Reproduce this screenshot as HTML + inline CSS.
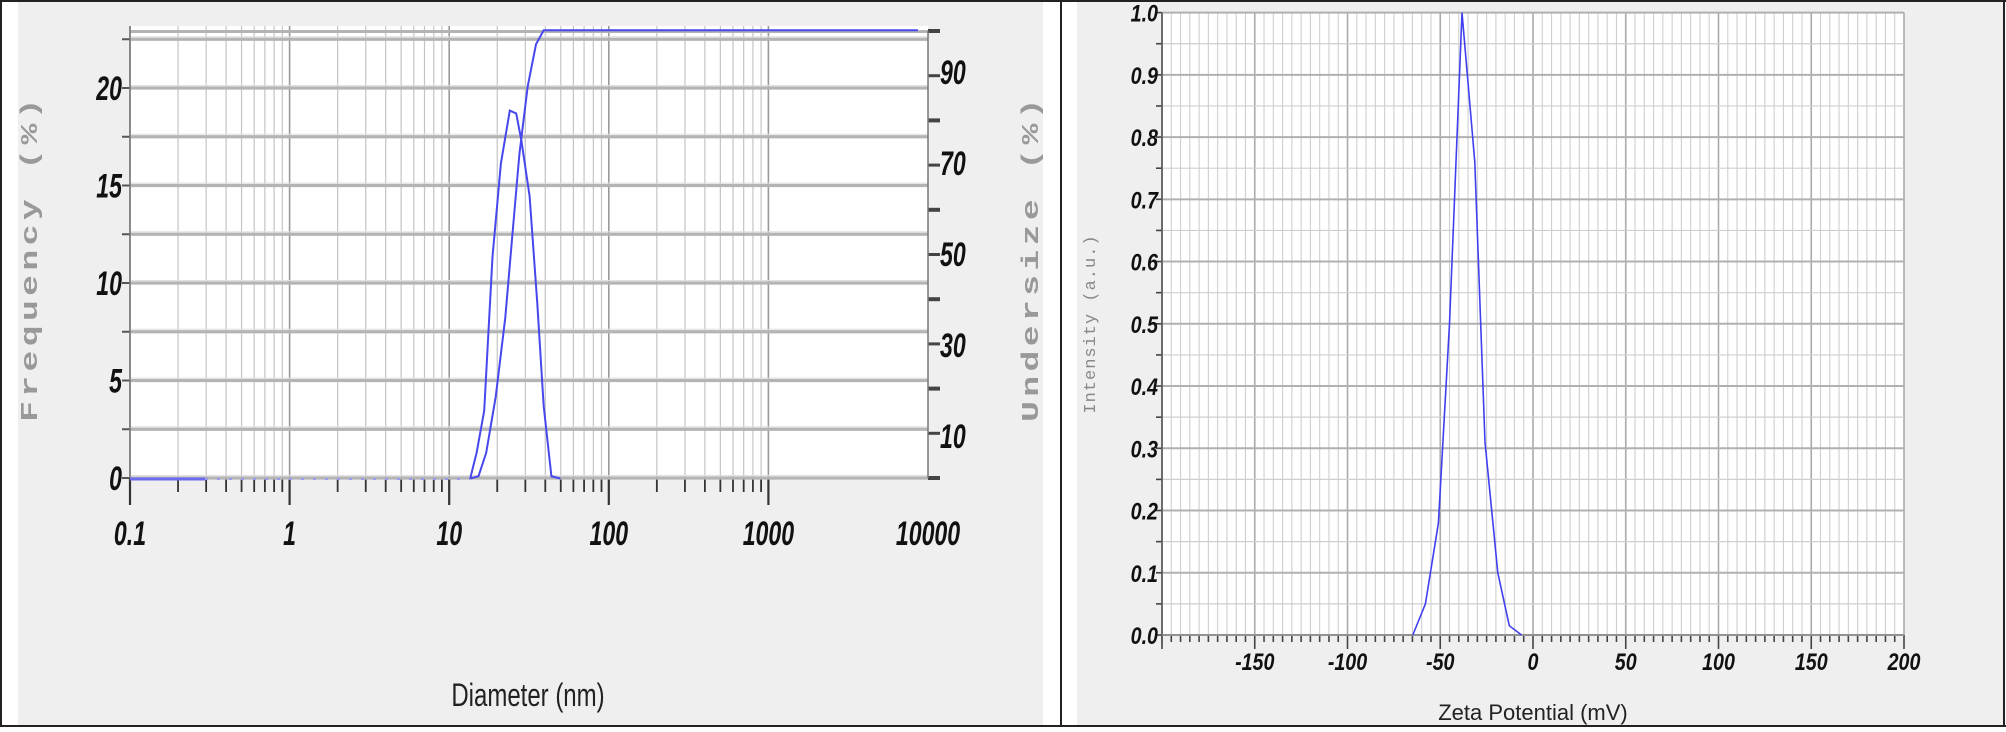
<!DOCTYPE html>
<html><head><meta charset="utf-8"><style>
html,body{margin:0;padding:0;background:#fff;}
body{width:2006px;height:732px;overflow:hidden;position:relative;}
svg{position:absolute;left:0;top:0;}
.n{font-family:"Liberation Sans",sans-serif;font-weight:bold;font-style:italic;fill:#111;}
</style></head><body>
<svg id="s" width="2006" height="732" viewBox="0 0 2006 732" xmlns="http://www.w3.org/2000/svg">
<rect x="0" y="0" width="2006" height="732" fill="#fff"/>
<rect x="18" y="2" width="1025" height="723" fill="#efefef"/>
<rect x="1077" y="2" width="927" height="723" fill="#efefef"/>
<rect x="130" y="26" width="798" height="452" fill="#fff"/>
<rect x="1162" y="12" width="742" height="623" fill="#fff"/>
<g id="g"></g>
<rect x="0" y="0" width="2006" height="2" fill="#222"/>
<rect x="0" y="0" width="2" height="726" fill="#222"/>
<rect x="0" y="725" width="2006" height="2" fill="#222"/>
<rect x="2003" y="0" width="2" height="726" fill="#222"/>
<rect x="1060" y="0" width="2" height="726" fill="#222"/>
<text x="528" y="706" font-family="Liberation Sans,sans-serif" font-size="32" fill="#222" text-anchor="middle" transform="translate(528 0) scale(0.75 1) translate(-528 0)">Diameter (nm)</text>
<text font-family="Liberation Mono,monospace" font-size="24" font-weight="bold" fill="#999" letter-spacing="3" text-anchor="middle" transform="translate(37 258) rotate(-90) scale(1.45 1)">Frequency (%)</text>
<text font-family="Liberation Mono,monospace" font-size="24" font-weight="bold" fill="#999" letter-spacing="3" text-anchor="middle" transform="translate(1038 258) rotate(-90) scale(1.45 1)">Undersize (%)</text>
<text font-family="Liberation Mono,monospace" font-size="17" fill="#888" letter-spacing="1" text-anchor="middle" transform="translate(1095 324) rotate(-90)">Intensity (a.u.)</text>
<text x="1533" y="720" font-family="Liberation Sans,sans-serif" font-size="22" fill="#222" text-anchor="middle">Zeta Potential (mV)</text>
</svg>
<script>
var g=document.getElementById('g'),h='';
function L(x1,y1,x2,y2,c,w){h+='<line x1="'+x1+'" y1="'+y1+'" x2="'+x2+'" y2="'+y2+'" stroke="'+c+'" stroke-width="'+w+'"/>';}
function T(x,y,t,fs,sx,anc){h+='<text class="n" font-size="'+fs+'" text-anchor="'+anc+'" transform="translate('+x+' '+y+') scale('+sx+' 1)">'+t+'</text>';}
var X0=130,D=159.6,Y0=478,U=19.5;
for(var k=0;k<5;k++){for(var m=1;m<10;m++){if(k==4&&m>1)break;var x=X0+D*(k+Math.log10(m));
 L(x,26,x,Y0,m==1?'#999':'#c4c4c4',m==1?1.6:1.2);
 L(x,Y0,x,m==1?505:492,'#333',m==1?2.2:1.8);}}
for(var i=0;i<=9;i++){var y=Y0-i*2.5*U;L(X0,y,928,y,'#b4b4b4',3.2);L(X0,y-2.5,928,y-2.5,'#e0e0e0',1);L(122,y,X0,y,'#555',2);}
L(X0,Y0-23*U+2,928,Y0-23*U+2,'#b4b4b4',3);
L(X0,26,X0,Y0,'#777',1.5);
for(var i=0;i<=10;i++){var y=Y0-i*(Y0-31)/10;L(928,y,940,y,'#444',i%2?3:4);}
L(928,31,928,Y0,'#777',1.5);
[[0,'0'],[5,'5'],[10,'10'],[15,'15'],[20,'20']].forEach(function(a){T(122,Y0-a[0]*U+12,a[1],34,0.68,'end');});
[[90,72],[70,163],[50,254],[30,345],[10,436]].forEach(function(a){T(940,a[1]+12,a[0],34,0.68,'start');});
['0.1','1','10','100','1000','10000'].forEach(function(t,k){T(X0+D*k,545,t,34,0.68,'middle');});
var sx=1/1.5633,sy=1/2.142;
function P(pts){return pts.map(function(p){return (p[0]*sx).toFixed(1)+','+(p[1]*sy).toFixed(1)}).join(' ');}
h+='<line x1="130" y1="479" x2="205" y2="479" stroke="#6b6bf0" stroke-width="3"/>';
h+='<line x1="205" y1="479" x2="470" y2="479" stroke="#9a9af5" stroke-width="2" stroke-dasharray="3 9"/>';
h+='<polyline fill="none" stroke="#4747ee" stroke-width="2" points="'+P([[735,1025],[745,970],[757,880],[770,550],[783,350],[797,237],[807,243],[815,300],[828,420],[840,650],[850,870],[862,1020],[876,1025]])+'"/>';
h+='<polyline fill="none" stroke="#4747ee" stroke-width="2" points="'+P([[735,1025],[748,1020],[760,970],[775,850],[790,680],[800,520],[812,330],[825,185],[838,95],[850,65],[1435,65]])+'"/>';
var RX=1162,RW=742,RT=12.6,RB=635;
for(var i=0;i<=80;i++){var x=RX+i*RW/80;L(x,RT,x,RB,i%10==0?'#aaa':'#cfcfcf',i%10==0?1.6:1.1);L(x,RB,x,RB+(i%10==0?14:7),'#444',1.6);}
for(var i=0;i<=20;i++){var y=RB-i*(RB-RT)/20;L(RX,y,RX+RW,y,i%2==0?'#b0b0b0':'#cfcfcf',i%2==0?2:1.2);L(RX-6,y,RX,y,'#444',1.6);}
L(RX,RT,RX,RB+8,'#555',1.6);L(RX,RB,RX+RW,RB,'#888',1.6);
for(var i=0;i<=10;i++){T(RX-4,RB-i*(RB-RT)/10+9,(i/10).toFixed(1),24,0.82,'end');}
[-150,-100,-50,0,50,100,150,200].forEach(function(v){T(RX+(v+200)*RW/400,670,v,24,0.82,'middle');});
var z=[[-64.8,0],[-58,0.05],[-51,0.18],[-45,0.5],[-38.3,1.0],[-31.4,0.76],[-25.9,0.31],[-19,0.1],[-12.8,0.015],[-6.2,0]];
h+='<polyline fill="none" stroke="#3f3ff0" stroke-width="1.6" points="'+z.map(function(p){return (RX+(p[0]+200)*RW/400).toFixed(1)+','+(RB-p[1]*(RB-RT)).toFixed(1)}).join(' ')+'"/>';
g.innerHTML=h;
</script>
</body></html>
